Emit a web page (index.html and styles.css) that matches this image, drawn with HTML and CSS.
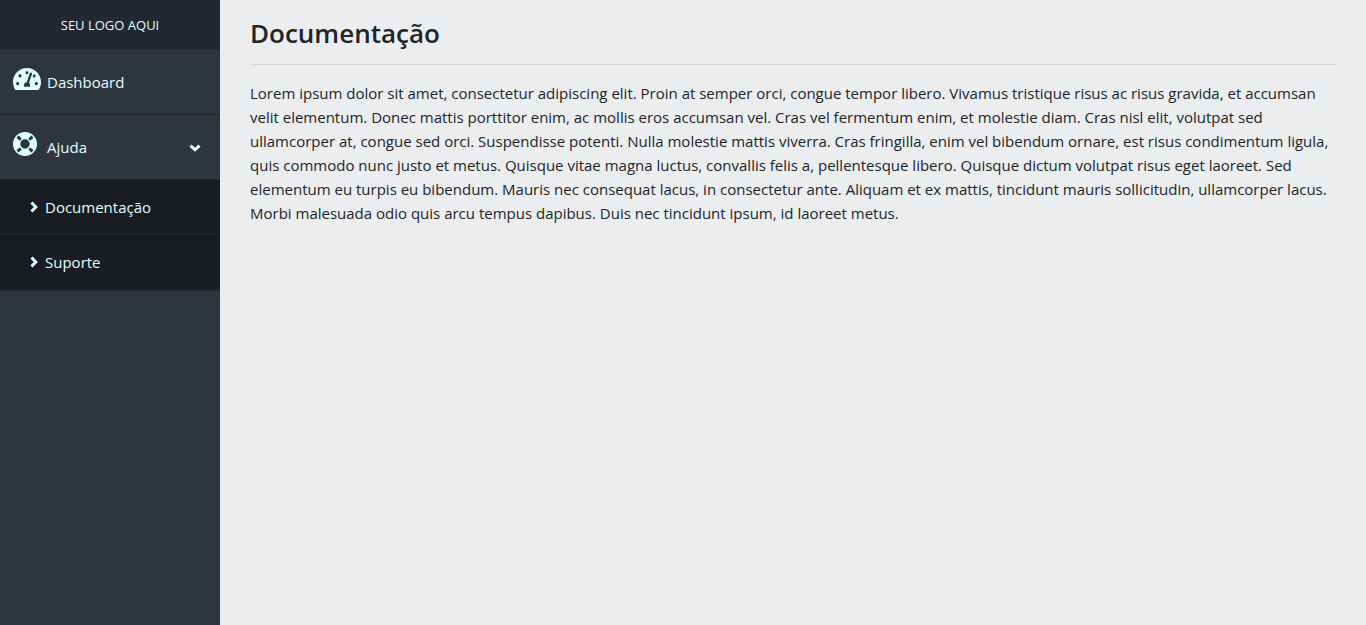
FILE: index.html
```html
<!DOCTYPE html>
<html lang="pt-BR">
<head>
<meta charset="utf-8">
<title>Documentação</title>
<link rel="stylesheet" href="styles.css">
</head>
<body>
<div class="layout">
  <aside class="sidebar">
    <div class="logo">SEU LOGO AQUI</div>
    <nav>
      <a class="item" href="#dashboard">
        <svg class="gauge" viewBox="0 32 576 448" aria-hidden="true"><path d="M288 32C128.94 32 0 160.94 0 320c0 52.8 14.25 102.26 39.06 144.8 5.61 9.62 16.3 15.2 27.44 15.2h443c11.14 0 21.83-5.58 27.44-15.2C561.75 422.26 576 372.8 576 320c0-159.06-128.94-288-288-288zm0 64c14.71 0 26.58 10.13 30.32 23.65-1.11 2.26-2.64 4.23-3.45 6.67l-9.22 27.67c-5.13 3.49-10.97 6.01-17.64 6.01-17.67 0-32-14.33-32-32S270.33 96 288 96zM96 384c-17.67 0-32-14.33-32-32s14.33-32 32-32 32 14.33 32 32-14.33 32-32 32zm48-160c-17.67 0-32-14.33-32-32s14.33-32 32-32 32 14.33 32 32-14.33 32-32 32zm246.77-72.41l-61.33 184C343.13 347.33 352 364.54 352 384c0 11.72-3.38 22.55-8.88 32H232.88c-5.5-9.45-8.88-20.28-8.88-32 0-33.94 26.5-61.43 59.9-63.59l61.34-184.01c4.17-12.56 17.73-19.45 30.36-15.17 12.57 4.19 19.35 17.79 15.17 30.36zm14.66 57.2l15.52-46.55c3.47-1.29 7.13-2.23 11.05-2.23 17.67 0 32 14.33 32 32s-14.33 32-32 32c-11.38-.01-20.89-6.28-26.57-15.22zM480 384c-17.67 0-32-14.33-32-32s14.33-32 32-32 32 14.33 32 32-14.33 32-32 32z"/></svg>
        <span class="label">Dashboard</span>
      </a>
      <button class="item" type="button" aria-expanded="true" aria-controls="help-menu">
        <svg class="ring" viewBox="8 8 496 496" aria-hidden="true"><path d="M256 8C119.033 8 8 119.033 8 256s111.033 248 248 248 248-111.033 248-248S392.967 8 256 8zm173.696 119.559l-63.399 63.399c-10.987-18.559-26.67-34.252-45.255-45.255l63.399-63.399a218.396 218.396 0 0 1 45.255 45.255zM256 352c-53.019 0-96-42.981-96-96s42.981-96 96-96 96 42.981 96 96-42.981 96-96 96zM127.559 82.304l63.399 63.399c-18.559 10.987-34.252 26.67-45.255 45.255l-63.399-63.399a218.372 218.372 0 0 1 45.255-45.255zM82.304 384.441l63.399-63.399c10.987 18.559 26.67 34.252 45.255 45.255l-63.399 63.399a218.396 218.396 0 0 1-45.255-45.255zm302.137 45.255l-63.399-63.399c18.559-10.987 34.252-26.67 45.255-45.255l63.399 63.399a218.403 218.403 0 0 1-45.255 45.255z"/></svg>
        <span class="label">Ajuda</span>
        <svg class="down" viewBox="0 0 12 8" aria-hidden="true"><path d="M1.500 1.600 6 5.800l4.500-4.200"/></svg>
      </button>
      <div class="submenu" id="help-menu">
        <a class="subitem" href="#documentacao"><svg class="right" viewBox="0 0 8 12" aria-hidden="true"><path d="M1.500 1.500 5.800 6l-4.300 4.500"/></svg>Documentação</a>
        <a class="subitem" href="#suporte"><svg class="right" viewBox="0 0 8 12" aria-hidden="true"><path d="M1.500 1.500 5.800 6l-4.300 4.500"/></svg>Suporte</a>
      </div>
    </nav>
  </aside>
  <main class="content">
    <h1 class="title">Documentação</h1>
    <p class="text">Lorem ipsum dolor sit amet, consectetur adipiscing elit. Proin at semper orci, congue tempor libero. Vivamus tristique risus ac risus gravida, et accumsan<br>
    velit elementum. Donec mattis porttitor enim, ac mollis eros accumsan vel. Cras vel fermentum enim, et molestie diam. Cras nisl elit, volutpat sed<br>
    ullamcorper at, congue sed orci. Suspendisse potenti. Nulla molestie mattis viverra. Cras fringilla, enim vel bibendum ornare, est risus condimentum ligula,<br>
    quis commodo nunc justo et metus. Quisque vitae magna luctus, convallis felis a, pellentesque libero. Quisque dictum volutpat risus eget laoreet. Sed<br>
    elementum eu turpis eu bibendum. Mauris nec consequat lacus, in consectetur ante. Aliquam et ex mattis, tincidunt mauris sollicitudin, ullamcorper lacus.<br>
    Morbi malesuada odio quis arcu tempus dapibus. Duis nec tincidunt ipsum, id laoreet metus.</p>
  </main>
</div>
</body>
</html>
```
FILE: styles.css
```css
* {
  box-sizing: border-box;
}

body {
  margin: 0;
  font-family: "Open Sans", "Noto Sans", sans-serif;
  font-size: 15px;
  line-height: 24px;
  color: #212529;
  background: #ebedef;
}

.layout {
  display: flex;
  min-height: 100vh;
}

.sidebar {
  flex: 0 0 220px;
  background: #2f353d;
  color: #e0ffff;
}

.logo {
  padding: 13px 0;
  background: #23272f;
  text-align: center;
  font-size: 13px;
}

.item {
  display: flex;
  align-items: flex-start;
  width: 100%;
  padding: 17px 19px 16px 13px;
  border: 0;
  border-bottom: 1px solid #23282e;
  background: none;
  color: inherit;
  font: inherit;
  text-align: left;
  text-decoration: none;
}

.item svg {
  flex: none;
  fill: currentColor;
}

.label {
  flex: 1;
  padding: 3px 0 4px;
}

.item .gauge {
  width: 28px;
  height: 22px;
  margin: 1px 6px 0 0;
}

.item .ring {
  width: 24px;
  height: 24px;
  margin-right: 10px;
}

.item .down {
  width: 12px;
  height: 8px;
  margin-top: 12px;
}

.down,
.right {
  stroke: currentColor;
  stroke-width: 3;
}

.item .down,
.right {
  fill: none;
}

.submenu {
  background: #191c20;
  border-bottom: 1px solid #23282e;
}

.subitem {
  display: flex;
  align-items: center;
  gap: 7px;
  padding: 15px 30px;
  border-bottom: 1px solid #23282e;
  color: inherit;
  text-decoration: none;
}

.right {
  width: 8px;
  height: 12px;
}

.content {
  flex: 1;
  min-width: 0;
  padding: 16px 30px;
}

.title {
  margin: 0 0 16px;
  padding-bottom: 14px;
  border-bottom: 1px solid #d3d5d7;
  font-size: 26px;
  font-weight: 600;
  line-height: 34px;
}

.text {
  margin: 0;
}
```
